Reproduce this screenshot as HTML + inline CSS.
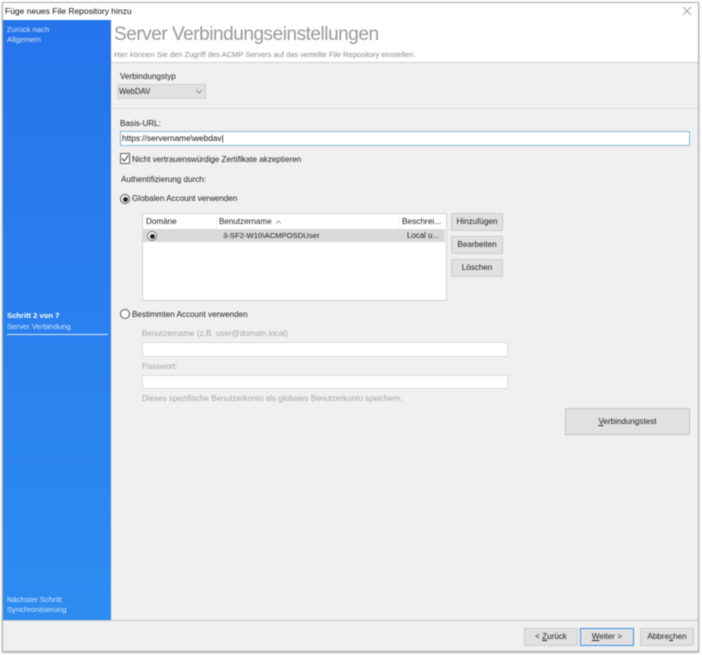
<!DOCTYPE html>
<html lang="de"><head><meta charset="utf-8"><style>
*{box-sizing:border-box}
html,body{margin:0;padding:0;width:702px;height:655px;overflow:hidden;background:#fff}
body{font-family:"Liberation Sans",sans-serif;font-size:8.1px;color:#222;position:relative}
.a{position:absolute;white-space:nowrap}
.t{line-height:11px}
.btn{position:absolute;background:#e1e1e1;border:1px solid #cdcdcd;text-align:center;color:#222;white-space:nowrap}
.in{position:absolute;background:#fff;border:1px solid #dcdcdc}
.dis{color:#a6a6a6}
.side{color:#d3e4fb;font-size:7.7px}
u{text-decoration:underline}
#w{position:absolute;left:0;top:0;width:702px;height:655px;filter:blur(.4px)}
</style></head><body><div id="w">
<div class="a" style="left:0;top:0;width:702px;height:655px;background:#fff"></div>
<div class="a" style="left:2px;top:2px;width:697px;height:650px;background:#f0f0f0;border:1px solid #a9a9a9;box-shadow:0 1px 2px #bbb"></div>
<div class="a" style="left:3px;top:3px;width:695px;height:60px;background:#fff;border-bottom:1px solid #cfcfcf"></div>
<div class="a t" style="left:5px;top:6px;font-size:8.5px;color:#111">Füge neues File Repository hinzu</div>
<svg class="a" style="left:682px;top:6px" width="10" height="10" viewBox="0 0 10 10"><path d="M1 1L9 9M9 1L1 9" stroke="#888" stroke-width=".8" fill="none"/></svg>
<div class="a" style="left:3px;top:20px;width:108px;height:600px;background:linear-gradient(#2674ec,#2e8cf0)"></div>
<div class="a t side" style="left:7px;top:24px">Zurück nach</div>
<div class="a t side" style="left:7px;top:34px">Allgemein</div>
<div class="a t" style="left:7px;top:310px;color:#fff;font-weight:bold;font-size:7.6px">Schritt 2 von 7</div>
<div class="a t side" style="left:7px;top:321px">Server Verbindung</div>
<div class="a" style="left:7px;top:334px;width:101px;height:1px;background:#dbe8fb"></div>
<div class="a t side" style="left:7px;top:594px">Nächster Schritt</div>
<div class="a t side" style="left:7px;top:604px">Synchronisierung</div>
<div class="a" style="left:114px;top:22px;font-size:19px;letter-spacing:-.46px;line-height:26px;color:#999">Server Verbindungseinstellungen</div>
<div class="a t" style="left:114px;top:49px;font-size:7.55px;color:#888">Hier können Sie den Zugriff des ACMP Servers auf das verteilte File Repository einstellen.</div>
<div class="a t" style="left:120px;top:71px">Verbindungstyp</div>
<div class="a" style="left:117px;top:84px;width:89px;height:15px;background:#e1e1e1;border:1px solid #cfcfcf;padding-left:1px;line-height:13px;font-size:7.8px;color:#222">WebDAV</div>
<svg class="a" style="left:195px;top:89px" width="8" height="5" viewBox="0 0 8 5"><path d="M1 1L4 4L7 1" stroke="#777" stroke-width=".8" fill="none"/></svg>
<div class="a" style="left:112px;top:108px;width:586px;height:1px;background:#dadada"></div>
<div class="a t" style="left:120px;top:118px">Basis-URL:</div>
<div class="a" style="left:120px;top:131px;width:570px;height:15px;background:#fff;border:1px solid #86b8e2;padding-left:1px;line-height:13px;font-size:8.3px;color:#111">https://servername\webdav|</div>
<div class="a" style="left:120px;top:153px;width:10px;height:11px;background:#fff;border:1px solid #666"></div>
<svg class="a" style="left:120px;top:153px" width="10" height="11" viewBox="0 0 10 11"><path d="M2 5.5L4.2 8L8.3 2.5" stroke="#333" stroke-width="1" fill="none"/></svg>
<div class="a t" style="left:132px;top:154px">Nicht vertrauenswürdige Zertifikate akzeptieren</div>
<div class="a t" style="left:121px;top:174px">Authentifizierung durch:</div>
<div class="a" style="left:120px;top:194px;width:10px;height:10px;border-radius:50%;background:#fff;border:1px solid #555"></div>
<div class="a" style="left:122.5px;top:196.5px;width:5px;height:5px;border-radius:50%;background:#222"></div>
<div class="a t" style="left:132px;top:193px">Globalen Account verwenden</div>
<div class="a" style="left:142px;top:213px;width:305px;height:88px;background:#fff;border:1px solid #d4d4d4"></div>
<div class="a" style="left:216px;top:214px;width:1px;height:15px;background:#eee"></div>
<div class="a" style="left:398px;top:214px;width:1px;height:15px;background:#eee"></div>
<div class="a t" style="left:146px;top:216px">Domäne</div>
<div class="a t" style="left:219px;top:216px">Benutzername</div>
<svg class="a" style="left:275px;top:220px" width="7" height="4" viewBox="0 0 7 4"><path d="M1 3.5L3.5 1L6 3.5" stroke="#888" stroke-width=".8" fill="none"/></svg>
<div class="a t" style="left:402px;top:216px;font-size:8.3px">Beschrei...</div>
<div class="a" style="left:143px;top:229px;width:302px;height:13px;background:#d9d9d9"></div>
<div class="a" style="left:147px;top:231px;width:10px;height:10px;border-radius:50%;background:#fff;border:1px solid #777"></div>
<div class="a" style="left:149.5px;top:233.5px;width:5px;height:5px;border-radius:50%;background:#222"></div>
<div class="a t" style="left:223px;top:230px;font-size:7.7px">3-SF2-W10\ACMPOSDUser</div>
<div class="a t" style="left:407px;top:230px;font-size:7.9px">Local u...</div>
<div class="btn" style="left:451px;top:213px;width:52px;height:18px;line-height:16px">Hinzufügen</div>
<div class="btn" style="left:451px;top:236px;width:52px;height:18px;line-height:16px">Bearbeiten</div>
<div class="btn" style="left:451px;top:259px;width:52px;height:18px;line-height:16px">Löschen</div>
<div class="a" style="left:120px;top:309px;width:10px;height:10px;border-radius:50%;background:#fff;border:1px solid #555"></div>
<div class="a t" style="left:132px;top:309px">Bestimmten Account verwenden</div>
<div class="a t dis" style="left:142px;top:328px">Benutzername (z.B. user@domain.local)</div>
<div class="in" style="left:142px;top:342px;width:366px;height:15px"></div>
<div class="a t dis" style="left:142px;top:361px">Passwort:</div>
<div class="in" style="left:142px;top:375px;width:366px;height:14px"></div>
<div class="a t dis" style="left:142px;top:393px">Dieses spezifische Benutzerkonto als globales Benutzerkonto speichern.</div>
<div class="btn" style="left:565px;top:408px;width:125px;height:27px;line-height:25px;border-color:#c4c4c4"><u>V</u>erbindungstest</div>
<div class="a" style="left:3px;top:620px;width:695px;height:1px;background:#c4c4c4"></div>
<div class="btn" style="left:524px;top:628px;width:54px;height:18px;line-height:16px">&lt; <u>Z</u>urück</div>
<div class="btn" style="left:580px;top:628px;width:54px;height:18px;line-height:15px;border:1.5px solid #3f8fdc"><u>W</u>eiter &gt;</div>
<div class="btn" style="left:640px;top:628px;width:54px;height:18px;line-height:16px">Abbre<u>c</u>hen</div>
</div></body></html>
